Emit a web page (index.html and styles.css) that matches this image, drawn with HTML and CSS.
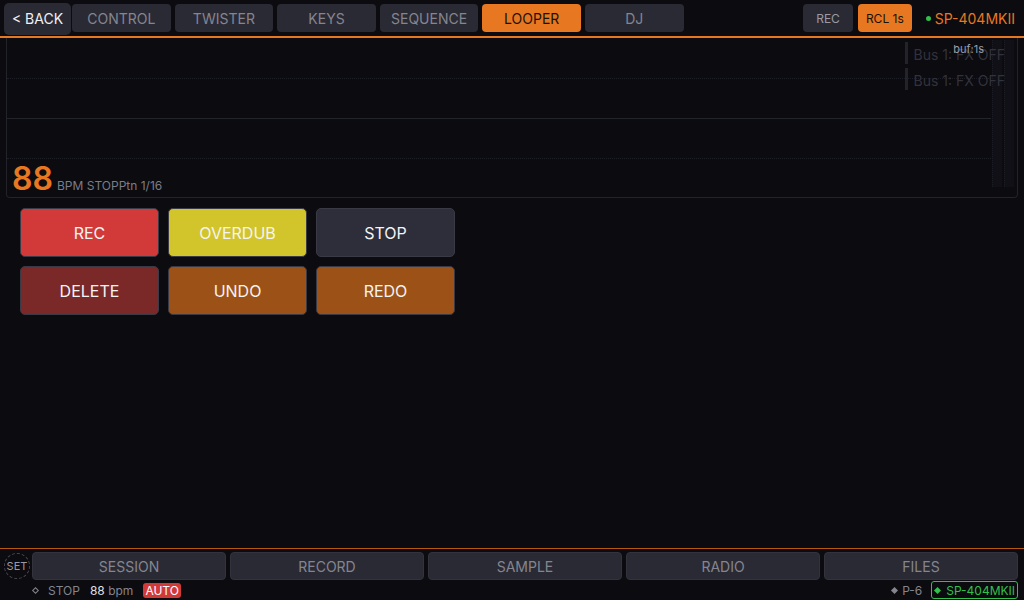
FILE: index.html
```html
<!DOCTYPE html>
<html lang="en">
<head>
    <meta charset="UTF-8">
    <title>Looper</title>
    <link rel="stylesheet" href="styles.css">
</head>
<body>
    <header class="topbar">
        <button class="back">&lt; BACK</button>
        <nav class="tabs">
            <span class="tab">CONTROL</span>
            <span class="tab">TWISTER</span>
            <span class="tab">KEYS</span>
            <span class="tab">SEQUENCE</span>
            <span class="tab active">LOOPER</span>
            <span class="tab">DJ</span>
        </nav>
        <div class="top-right">
            <span class="small-btn">REC</span>
            <span class="small-btn on">RCL 1s</span>
            <span class="device"><i class="dot"></i>SP-404MKII</span>
        </div>
    </header>

    <section class="wave">
        <div class="grid-line l1"></div>
        <div class="grid-line l2"></div>
        <div class="grid-line l3"></div>
        <div class="meters"><span></span><span></span></div>
        <div class="bus-list">
            <div class="bus">Bus 1: FX OFF</div>
            <div class="bus">Bus 1: FX OFF</div>
        </div>
        <span class="buf">buf:1s</span>
        <div class="bpm"><b>88</b><span>BPM STOPPtn 1/16</span></div>
    </section>

    <section class="pads">
        <button class="pad rec">REC</button>
        <button class="pad overdub">OVERDUB</button>
        <button class="pad stop">STOP</button>
        <button class="pad delete">DELETE</button>
        <button class="pad undo">UNDO</button>
        <button class="pad undo">REDO</button>
    </section>

    <footer class="bottom">
        <div class="bottom-tabs">
            <span class="set">SET</span>
            <span class="btab">SESSION</span>
            <span class="btab">RECORD</span>
            <span class="btab">SAMPLE</span>
            <span class="btab">RADIO</span>
            <span class="btab">FILES</span>
        </div>
        <div class="status">
            <span class="diamond"></span>
            <span class="st">STOP</span>
            <span class="bpmval"><b>88</b> bpm</span>
            <span class="auto">AUTO</span>
            <span class="spacer"></span>
            <span class="p6"><i></i>P-6</span>
            <span class="dev-ok"><i></i>SP-404MKII</span>
        </div>
    </footer>
</body>
</html>
```

FILE: styles.css
```css
* {
    box-sizing: border-box;
}
html, body {
    height: 100%;
}
body {
    margin: 0;
    background-color: #0b0b10;
    color: #e6e6ea;
    font-family: Inter, "Noto Sans", sans-serif;
    display: flex;
    flex-direction: column;
    overflow: hidden;
}
button {
    font-family: inherit;
    border: none;
}
.topbar {
    display: flex;
    align-items: center;
    height: 38px;
    padding: 0 9px 0 4px;
    border-bottom: 2px solid #e87722;
}
.back {
    height: 32px;
    width: 67px;
    margin-top: 1px;
    margin-right: 1px;
    background-color: #2a2a35;
    color: #f0f0f0;
    font-size: 14px;
    border-radius: 5px;
}
.tabs {
    display: flex;
    gap: 4px;
}
.tab {
    width: 98.6px;
    height: 28px;
    display: flex;
    align-items: center;
    justify-content: center;
    background-color: #2a2a35;
    color: #85858f;
    font-size: 14px;
    border-radius: 4px;
}
.tab.active {
    background-color: #e87722;
    color: #1b1206;
}
.top-right {
    margin-left: auto;
    display: flex;
    align-items: center;
    gap: 5px;
}
.small-btn {
    height: 28px;
    padding: 0 13px;
    display: flex;
    align-items: center;
    background-color: #2a2a35;
    color: #9a9aa4;
    font-size: 12px;
    border-radius: 4px;
}
.small-btn.on {
    background-color: #e87722;
    color: #1b1206;
    padding: 0 8px;
}
.device {
    display: flex;
    align-items: center;
    margin-left: 9px;
    color: #e87722;
    font-size: 14px;
}
.dot {
    width: 5px;
    height: 5px;
    border-radius: 50%;
    background-color: #33c04a;
    margin-right: 4px;
}

.wave {
    position: relative;
    height: 160px;
    margin: 0 6px;
    border: 1px solid #23232b;
    border-top: none;
    border-radius: 0 0 4px 4px;
}
.grid-line {
    position: absolute;
    left: 0;
    right: 26px;
    border-top: 1px dotted #1e1e26;
}
.grid-line.l1 { top: 40px; }
.grid-line.l2 { top: 80px; border-top: 1px solid #23232c; }
.grid-line.l3 { top: 120px; }
.meters {
    position: absolute;
    right: 3px;
    top: 2px;
    bottom: 10px;
    display: flex;
    gap: 2px;
}
.meters span {
    width: 10px;
    background-color: #101016;
    border-left: 1px dotted #1c1c24;
}
.bus-list {
    position: absolute;
    right: 12px;
    top: 4px;
    display: flex;
    flex-direction: column;
    gap: 4px;
}
.bus {
    border-left: 3px solid #23232c;
    padding: 4px 0 0 6px;
    height: 22px;
    color: #32323c;
    font-size: 14px;
    line-height: 18px;
}
.buf {
    position: absolute;
    right: 33px;
    top: 4px;
    color: #9c9ca6;
    font-size: 11px;
}
.bpm {
    position: absolute;
    left: 5px;
    bottom: -1px;
    display: flex;
    align-items: baseline;
    gap: 4px;
}
.bpm b {
    color: #e87722;
    font-size: 32px;
    font-weight: 600;
}
.bpm span {
    color: #7c7c88;
    font-size: 12px;
}

.pads {
    display: grid;
    grid-template-columns: repeat(3, 139px);
    grid-auto-rows: 49px;
    column-gap: 9px;
    row-gap: 9px;
    padding: 10px 0 0 20px;
}
.pad {
    border-radius: 5px;
    border: 1px solid #3a3a46;
    color: #f4f4f4;
    font-size: 16px;
}
.pad.rec { background-color: #d23a3a; }
.pad.overdub { background-color: #d2c42b; }
.pad.stop { background-color: #2e2e3a; }
.pad.delete { background-color: #7a2828; }
.pad.undo { background-color: #9c5216; }

.bottom {
    margin-top: auto;
    border-top: 1px solid #b8580f;
}
.bottom-tabs {
    display: flex;
    align-items: center;
    gap: 4px;
    padding: 3px 6px 0 4px;
}
.set {
    width: 26px;
    height: 26px;
    border-radius: 50%;
    border: 1px dashed #4a4a55;
    color: #9a9aa4;
    font-size: 11px;
    display: flex;
    align-items: center;
    justify-content: center;
    margin-right: -2px;
}
.btab {
    flex: 1;
    height: 28px;
    display: flex;
    align-items: center;
    justify-content: center;
    background-color: #2a2a35;
    border: 1px solid #33333e;
    color: #85858f;
    font-size: 14px;
    border-radius: 4px;
}
.status {
    display: flex;
    align-items: center;
    height: 20px;
    padding: 0 6px 0 33px;
    font-size: 12px;
    color: #85858f;
}
.diamond {
    width: 5px;
    height: 5px;
    border: 1px solid #85858f;
    transform: rotate(45deg);
    margin-right: 10px;
}
.st {
    margin-right: 10px;
}
.bpmval b {
    color: #e0e0e6;
    font-weight: 400;
}
.auto {
    margin-left: 10px;
    background-color: #d23a3a;
    color: #fff;
    padding: 0 2px;
    border-radius: 3px;
    line-height: 15px;
}
.spacer {
    flex: 1;
}
.p6 {
    display: flex;
    align-items: center;
    margin-right: 9px;
}
.p6 i {
    width: 5px;
    height: 5px;
    background-color: #85858f;
    transform: rotate(45deg);
    margin-right: 5px;
}
.dev-ok {
    display: flex;
    align-items: center;
    border: 1px solid #33c04a;
    color: #33c04a;
    border-radius: 3px;
    padding: 0 2px 0 3px;
    height: 18px;
}
.dev-ok i {
    width: 5px;
    height: 5px;
    background-color: #33c04a;
    transform: rotate(45deg);
    margin-right: 6px;
}
```
